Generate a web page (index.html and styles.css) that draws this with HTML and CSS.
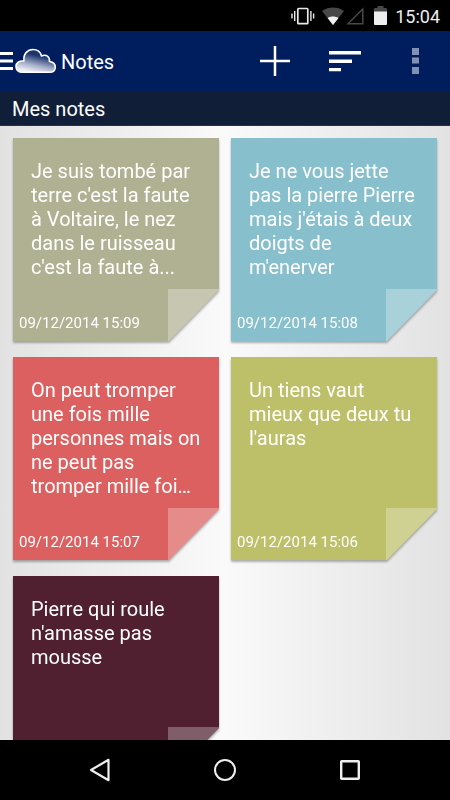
FILE: index.html
```
<!DOCTYPE html>
<html lang="fr">
<head>
    <meta charset="UTF-8">
    <meta name="viewport" content="width=device-width, initial-scale=1.0">
    <title>Notes</title>
    <link rel="stylesheet" href="styles.css">
</head>
<body>
    <div class="status-bar">
        <svg class="vibrate" width="24" height="18" viewBox="0 0 24 18" fill="none" stroke="#e8e8e8">
            <rect x="6.8" y="1.5" width="10" height="15.2" rx="0.8" stroke-width="1.7"/>
            <path d="M1 6.5v5M3.7 4v10M19.9 4v10M22.6 6.5v5" stroke-width="1.4"/>
        </svg>
        <svg class="wifi" width="22" height="18" viewBox="0 0 22 18">
            <path d="M0 4C6.500-0.600 15.500-0.600 22 4L11 18z" fill="#484848"/>
            <path d="M5.500 11C8.800 9 13.200 9 16.500 11L11 18z" fill="#f2f2f2"/>
        </svg>
        <svg class="signal" width="18" height="18" viewBox="0 0 18 18">
            <path d="M2 16.800L16.800 2V16.800z" fill="none" stroke="#484848" stroke-width="1.500"/>
        </svg>
        <svg class="battery" width="13" height="19" viewBox="0 0 13 19">
            <path d="M0 6V3q0-1 1-1h2.500V0h6v2H12q1 0 1 1v3z" fill="#484848"/>
            <path d="M0 5.500h13V18q0 1-1 1H1q-1 0-1-1z" fill="#eee"/>
        </svg>
        <span class="clock">15:04</span>
    </div>

    <header class="action-bar">
        <button class="menu-btn" aria-label="Menu">
            <svg width="13" height="18" viewBox="0 0 13 18" fill="#fff">
                <path d="M0 0h13v3H0zM0 7.500h13v3H0zM0 15h13v3H0z"/>
            </svg>
        </button>
        <svg class="logo" width="42" height="26" viewBox="0 0 42 26">
            <defs>
                <linearGradient id="cloud" x1="0.300" y1="0.950" x2="0.600" y2="0.150">
                    <stop offset="0" stop-color="#eef0f6"/>
                    <stop offset="0.350" stop-color="#a9b1c9"/>
                    <stop offset="0.850" stop-color="#1d3570"/>
                </linearGradient>
            </defs>
            <path d="M6.500 24.200C3 24.200 1 21.500 1 18.500C1 15 4 12.500 9 13C8 6 12.500 1.500 18 1.500C22.500 1.500 25.500 4 26.500 8C31 5.800 35 8.500 34.500 13.500C38.500 14.200 40.500 16.500 40.300 19.300C40 22.300 37.800 24.200 34.800 24.200z" fill="url(#cloud)" stroke="#fff" stroke-width="1.600" stroke-linejoin="round"/>
        </svg>
        <h1>Notes</h1>
        <div class="actions">
            <button aria-label="Ajouter">
                <svg width="30" height="30" viewBox="0 0 30 30" stroke="#fff" stroke-width="2.500">
                    <path d="M15 0v30M0 15h30"/>
                </svg>
            </button>
            <button aria-label="Trier">
                <svg width="32" height="22" viewBox="0 0 32 22" fill="#fff">
                    <path d="M0 1h32v3.500H0zM0 9.500h23v3.500H0zM0 18h12v3.300H0z"/>
                </svg>
            </button>
            <button aria-label="Plus d'options">
                <svg width="7" height="26" viewBox="0 0 7 26" fill="#8490b3">
                    <path d="M0 0h7v7H0zM0 9.500h7v6H0zM0 19h7v7H0z"/>
                </svg>
            </button>
        </div>
    </header>

    <h2>Mes notes</h2>

    <main>
        <ul class="notes">
            <li class="note">
                <article class="paper khaki">
                    <p>Je suis tombé par terre c'est la faute à Voltaire, le nez dans le ruisseau c'est la faute à...</p>
                    <time datetime="2014-12-09T15:09">09/12/2014 15:09</time>
                </article>
            </li>
            <li class="note">
                <article class="paper blue">
                    <p>Je ne vous jette pas la pierre Pierre mais j'étais à deux doigts de m'enerver</p>
                    <time datetime="2014-12-09T15:08">09/12/2014 15:08</time>
                </article>
            </li>
            <li class="note">
                <article class="paper red">
                    <p>On peut tromper une fois mille personnes mais on ne peut pas tromper mille foi…</p>
                    <time datetime="2014-12-09T15:07">09/12/2014 15:07</time>
                </article>
            </li>
            <li class="note">
                <article class="paper green">
                    <p>Un tiens vaut mieux que deux tu l'auras</p>
                    <time datetime="2014-12-09T15:06">09/12/2014 15:06</time>
                </article>
            </li>
            <li class="note">
                <article class="paper plum">
                    <p>Pierre qui roule n'amasse pas mousse</p>
                </article>
            </li>
        </ul>
    </main>

    <nav class="nav-bar">
        <button aria-label="Retour">
            <svg width="24" height="26" viewBox="0 0 24 26">
                <path d="M3 13L20.500 2.800V23.200z" fill="none" stroke="#eee" stroke-width="2.200" stroke-linejoin="round"/>
            </svg>
        </button>
        <button aria-label="Accueil">
            <svg width="24" height="24" viewBox="0 0 24 24">
                <circle cx="12" cy="12" r="10" fill="none" stroke="#eee" stroke-width="2"/>
            </svg>
        </button>
        <button aria-label="Applications">
            <svg width="20" height="20" viewBox="0 0 20 20">
                <rect x="1.200" y="1.200" width="17.600" height="17.600" rx="0.500" fill="none" stroke="#eee" stroke-width="2.400"/>
            </svg>
        </button>
    </nav>
</body>
</html>
```

FILE: styles.css
```
* {
    box-sizing: border-box;
}
body {
    display: flex;
    flex-direction: column;
    height: 100vh;
    margin: 0;
    font-family: Roboto, sans-serif;
    color: #fff;
    background: #000;
}
svg {
    display: block;
    flex: none;
}
button {
    display: flex;
    align-items: center;
    justify-content: center;
    padding: 0;
    border: none;
    background: none;
    cursor: pointer;
}

/* Android status bar */
.status-bar {
    display: flex;
    flex: none;
    align-items: center;
    justify-content: flex-end;
    height: 31px;
    padding-right: 10px;
}
.wifi {
    margin-left: 7px;
}
.signal {
    margin-left: 2px;
}
.battery {
    margin-left: 10px;
}
.clock {
    margin-left: 8px;
    padding-top: 2px;
    font-size: 18px;
    line-height: 24px;
    color: #eee;
}

.action-bar {
    display: flex;
    flex: none;
    align-items: center;
    height: 60px;
    background: #001e5e;
}
.menu-btn {
    height: 60px;
}
.logo {
    margin-left: 2px;
}
h1 {
    margin: 0 0 0 4px;
    padding-top: 2px;
    font-size: 20px;
    font-weight: 400;
    line-height: 24px;
}
.actions {
    display: flex;
    margin-left: auto;
}
.actions button {
    width: 70px;
    height: 60px;
}

h2 {
    flex: none;
    margin: 0;
    padding: 6px 12px 4px;
    font-size: 20px;
    font-weight: 400;
    line-height: 24px;
    background: #111e38;
    border-bottom: 1px solid #24314c;
}

main {
    flex: 1;
    min-height: 0;
    overflow-y: auto;
    scrollbar-width: none;
    background: linear-gradient(to right, #e2e2e2, #fafafa 50%, #e2e2e2);
}
.notes {
    display: grid;
    grid-template-columns: 1fr 1fr;
    gap: 16px 12px;
    margin: 0;
    padding: 12px 13px 16px;
    list-style: none;
}
.note {
    filter: drop-shadow(0 2px 1px rgba(0, 0, 0, 0.3));
}
.paper {
    position: relative;
    display: flex;
    flex-direction: column;
    justify-content: space-between;
    height: 203px;
    padding: 21px 16px 8px 18px;
    clip-path: polygon(0 0, 100% 0, 100% calc(100% - 51px), calc(100% - 50px) 100%, 0 100%);
}
/* folded corner */
.paper::after {
    content: "";
    position: absolute;
    right: 0;
    bottom: 0;
    width: 51px;
    height: 52px;
    background: rgba(255, 255, 255, 0.28);
}
.paper p {
    margin: 0;
    font-size: 20px;
    line-height: 24px;
}
.paper time {
    margin-left: -12px;
    font-size: 15px;
    line-height: 20px;
}
.khaki { background: #b0b193; }
.blue { background: #88bfcc; }
.red { background: #db605f; }
.green { background: #bdc068; }
.plum { background: #502030; }

.nav-bar {
    display: flex;
    flex: none;
    justify-content: center;
    height: 60px;
}
.nav-bar button {
    width: 125px;
}
```
